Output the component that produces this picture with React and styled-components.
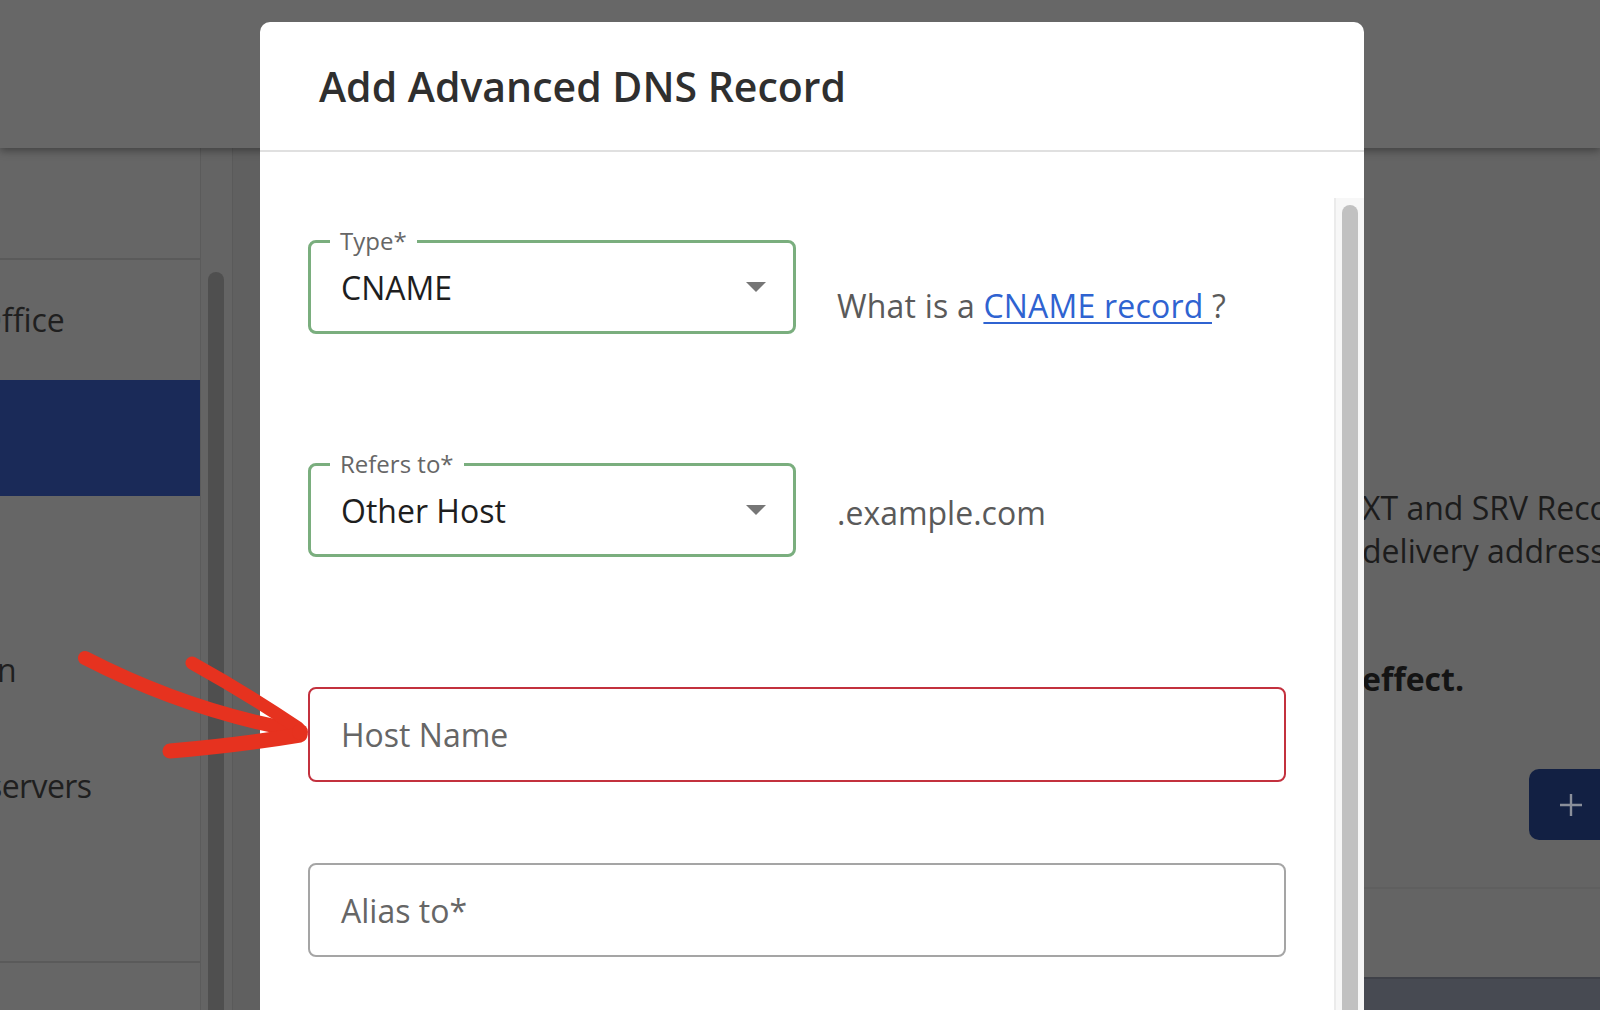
import React from "react";
import styled, { createGlobalStyle } from "styled-components";

const GlobalStyle = createGlobalStyle`
  html, body {
    margin: 0;
    padding: 0;
  }
  body {
    font-family: "Open Sans", "Noto Sans", "Liberation Sans", sans-serif;
    width: 1600px;
    height: 1010px;
    overflow: hidden;
    background: #646464;
  }
  * { box-sizing: border-box; }
`;

/* ---------- dimmed page behind the dialog ---------- */

const Page = styled.div`
  position: relative;
  width: 1600px;
  height: 1010px;
  overflow: hidden;
  display: flex;
  flex-direction: column;
  background: #646464;
`;

const TopBar = styled.header`
  flex: 0 0 148px;
  background: #676767;
  box-shadow: 0 3px 8px rgba(0, 0, 0, 0.35);
  position: relative;
  z-index: 1;
`;

const Workspace = styled.div`
  flex: 1;
  display: flex;
  min-height: 0;
`;

const Sidebar = styled.nav`
  flex: 0 0 201px;
  background: #666666;
  border-right: 1px solid #5b5b5b;
  display: flex;
  flex-direction: column;
  overflow: hidden;
`;

const SidebarTop = styled.div`
  flex: 0 0 112px;
  border-bottom: 2px solid #5a5a5a;
`;

const SidebarItem = styled.div`
  flex: 0 0 ${(p) => p.$h || 116}px;
  display: flex;
  align-items: center;
  background: ${(p) => (p.$active ? "#1a2a58" : "transparent")};
  border-bottom: ${(p) => (p.$divider ? "2px solid #5a5a5a" : "none")};
  white-space: nowrap;
`;

const SidebarLabel = styled.span`
  font-size: 32px;
  line-height: 43.6px;
  color: #1f1f1f;
  margin-left: ${(p) => p.$indent}px;
  letter-spacing: ${(p) => p.$track || 0}px;
`;

const SideScroll = styled.div`
  flex: 0 0 32px;
  background: #646464;
  border-right: 1px solid #5a5a5a;
  padding: 124px 8px 0 7px;
`;

const SideThumb = styled.div`
  height: 100%;
  background: #4f4f4f;
  border-radius: 8px 8px 0 0;
`;

const Gutter = styled.div`
  flex: 0 0 27px;
  background: #606060;
`;

const Content = styled.main`
  flex: 1;
  display: flex;
  flex-direction: column;
  padding-top: 338px;
  background: #646464;
`;

const Copy = styled.p`
  margin: 0 0 0 1102px;
  font-size: 32px;
  line-height: 43px;
  color: #1c1c1c;
  white-space: nowrap;
`;

const Strong = styled.p`
  margin: 85px 0 0 1102px;
  font-size: 32px;
  line-height: 43px;
  font-weight: 700;
  color: #141414;
  white-space: nowrap;
`;

const AddButton = styled.button`
  margin: 69px 0 0 1269px;
  height: 71px;
  width: 200px;
  border: none;
  border-radius: 10px;
  background: #122043;
  color: #8a8f9a;
  display: flex;
  align-items: center;
  padding: 0 0 0 30px;
  font-family: inherit;
`;

const ContentRule = styled.div`
  margin-top: 47px;
  height: 2px;
  background: #5f5f5f;
`;

const Footer = styled.footer`
  margin-top: auto;
  height: 33px;
  background: #474a52;
  border-top: 2px solid #3f4148;
`;

/* ---------- dialog ---------- */

const Dialog = styled.section`
  position: absolute;
  left: 260px;
  top: 22px;
  width: 1104px;
  height: 1010px;
  background: #ffffff;
  border-radius: 10px;
  display: flex;
  flex-direction: column;
  z-index: 2;
`;

const DialogHeader = styled.div`
  flex: 0 0 130px;
  display: flex;
  align-items: center;
  padding-left: 59px;
  border-bottom: 2px solid #e0e0e0;
`;

const Title = styled.h2`
  margin: 0;
  font-size: 41px;
  font-weight: 600;
  color: #2f2f2f;
`;

const DialogBody = styled.div`
  flex: 1;
  display: flex;
  min-height: 0;
`;

const Form = styled.div`
  flex: 1;
  padding: 88px 0 0 48px;
  display: flex;
  flex-direction: column;
`;

const FieldRow = styled.div`
  display: flex;
  align-items: flex-start;
  gap: 41px;
  margin-bottom: ${(p) => p.$gap || 0}px;
`;

const Outline = styled.div`
  position: relative;
  width: ${(p) => p.$w}px;
  height: ${(p) => p.$h || 94}px;
  border: ${(p) => p.$bw || 2}px solid ${(p) => p.$color};
  border-radius: 8px;
  display: flex;
  align-items: center;
  padding: 0 27px 0 ${(p) => 33 - (p.$bw || 2)}px;
  background: #fff;
`;

const FloatLabel = styled.label`
  position: absolute;
  left: 19px;
  top: -14px;
  padding: 0 10px;
  background: #fff;
  font-size: 24px;
  line-height: 24px;
  color: #666666;
`;

const Value = styled.span`
  flex: 1;
  font-size: 32px;
  color: #1e1e1e;
`;

const Placeholder = styled.span`
  flex: 1;
  font-size: 32px;
  color: #666666;
`;

const Caret = styled.svg`
  width: 20px;
  height: 10px;
  flex: 0 0 20px;
`;

const Helper = styled.div`
  padding-top: ${(p) => p.$top}px;
  font-size: 32px;
  line-height: 48px;
  color: #5a5a5a;
  white-space: nowrap;
  letter-spacing: ${(p) => p.$track || 0}px;
`;

const HelpLink = styled.a`
  color: #2f63d1;
  text-decoration: underline;
  text-decoration-thickness: 2px;
  text-underline-offset: 4px;
`;

const Track = styled.div`
  flex: 0 0 30px;
  margin-top: 46px;
  background: #f7f7f7;
  border-left: 2px solid #ebebeb;
  padding: 7px 6px 0 6px;
`;

const Thumb = styled.div`
  height: 100%;
  background: #c1c1c1;
  border-radius: 8px 8px 0 0;
`;

/* hand-drawn pointer laid over the page */
const Pointer = styled.svg`
  position: absolute;
  left: 60px;
  top: 640px;
  width: 260px;
  height: 130px;
  z-index: 3;
  overflow: visible;
`;

const Select = ({ label, value }) => (
  <Outline $w={488} $bw={3} $color="#7aae7e">
    <FloatLabel>{label}</FloatLabel>
    <Value>{value}</Value>
    <Caret viewBox="0 0 20 10">
      <path d="M0 0 L20 0 L10 10 Z" fill="#767676" />
    </Caret>
  </Outline>
);

export default function App() {
  return (
    <>
      <GlobalStyle />
      <Page>
        <TopBar />
        <Workspace>
          <Sidebar>
            <SidebarTop />
            <SidebarItem $h={120}>
              <SidebarLabel $indent={-23}>Office</SidebarLabel>
            </SidebarItem>
            <SidebarItem $active />
            <SidebarItem />
            <SidebarItem>
              <SidebarLabel $indent={-101}>Domain</SidebarLabel>
            </SidebarItem>
            <SidebarItem>
              <SidebarLabel $indent={-100} $track={-0.6}>Nameservers</SidebarLabel>
            </SidebarItem>
            <SidebarItem $h={119} $divider />
          </Sidebar>
          <SideScroll>
            <SideThumb />
          </SideScroll>
          <Gutter />
          <Content>
            <Copy>XT and SRV Records</Copy>
            <Copy>delivery addresses</Copy>
            <Strong>effect.</Strong>
            <AddButton>
              <svg width="24" height="24" viewBox="0 0 24 24">
                <path d="M12 1 V23 M1 12 H23" stroke="#8a8f9a" strokeWidth="2.4" />
              </svg>
            </AddButton>
            <ContentRule />
            <Footer />
          </Content>
        </Workspace>

        <Dialog>
          <DialogHeader>
            <Title>Add Advanced DNS Record</Title>
          </DialogHeader>
          <DialogBody>
            <Form>
              <FieldRow $gap={129}>
                <Select label="Type*" value="CNAME" />
                <Helper $top={42} $track={0.2}>
                  What is a <HelpLink href="#">CNAME record </HelpLink>?
                </Helper>
              </FieldRow>
              <FieldRow $gap={130}>
                <Select label="Refers to*" value="Other Host" />
                <Helper $top={26}>.example.com</Helper>
              </FieldRow>
              <FieldRow $gap={81}>
                <Outline $w={978} $h={95} $color="#c3313e">
                  <Placeholder>Host Name</Placeholder>
                </Outline>
              </FieldRow>
              <FieldRow>
                <Outline $w={978} $color="#a5a5a5">
                  <Placeholder>Alias to*</Placeholder>
                </Outline>
              </FieldRow>
            </Form>
            <Track>
              <Thumb />
            </Track>
          </DialogBody>
        </Dialog>

        <Pointer viewBox="0 0 260 130">
          <g fill="none" stroke="#e6321f" strokeLinecap="round" strokeLinejoin="round">
            <path d="M25 18 Q130 72 240 91" strokeWidth="14" />
            <path d="M132 23 Q188 54 238 88" strokeWidth="13" />
            <path d="M110 111 Q180 105 240 95" strokeWidth="15" />
          </g>
          <circle cx="240" cy="92" r="8" fill="#e6321f" />
        </Pointer>
      </Page>
    </>
  );
}
